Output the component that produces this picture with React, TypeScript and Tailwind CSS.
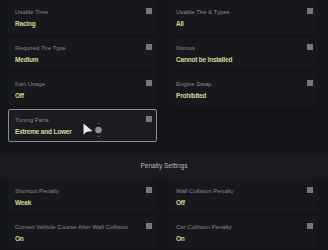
const TOP = [
  ["Usable Tires", "Racing", "Usable Tire & Types", "All"],
  ["Required Tire Type", "Medium", "Nitrous", "Cannot be Installed"],
  ["Kart Usage", "Off", "Engine Swap", "Prohibited"],
];

const PENALTY = [
  ["Shortcut Penalty", "Weak", "Wall Collision Penalty", "Off"],
  ["Correct Vehicle Course After Wall Collision", "On", "Car Collision Penalty", "On"],
];

function Cell({ label, value, selected }: { label: string; value: string; selected?: boolean }) {
  return (
    <div
      className={`relative h-[33px] w-[149px] rounded-[2px] px-[6px] pt-[6px] ${
        selected ? "border border-[#8a8b8d] bg-[#1b1c1f]" : "border border-transparent bg-[#17181b]"
      }`}
    >
      <div className="text-[6px] leading-[8px] text-[#87888b]">{label}</div>
      <div className="mt-[3px] text-[6.5px] font-bold leading-[10px] tracking-[-0.2px] text-[#d3d99b]">
        {value}
      </div>
      <span className="absolute right-[4px] top-[6px] h-[6px] w-[6px] bg-[#77787a]" />
    </div>
  );
}

function Pointer() {
  return (
    <svg className="absolute left-[82px] top-[121px]" width="24" height="18" viewBox="0 0 24 18">
      <path d="M1.5 2.5 L1.5 13.5 L4.5 11 L10.5 10 Z" fill="#e8e8e8" />
      <circle cx="16.5" cy="9" r="3.3" fill="#8d8e90" />
      <circle cx="16.5" cy="2.5" r="0.8" fill="#6a6b6d" />
      <circle cx="16.5" cy="15.5" r="0.8" fill="#6a6b6d" />
    </svg>
  );
}

export default function App() {
  return (
    <div
      className="relative h-[250px] w-[328px] overflow-hidden bg-[#141518]"
      style={{ fontFamily: '"Liberation Sans", Arial, sans-serif' }}
    >
      <div className="flex flex-col gap-[3px] px-2 pt-[1px]">
        {TOP.map((r) => (
          <div key={r[0]} className="flex gap-3">
            <Cell label={r[0]} value={r[1]} />
            <Cell label={r[2]} value={r[3]} />
          </div>
        ))}
        <div className="flex gap-3">
          <Cell label="Tuning Parts" value="Extreme and Lower" selected />
        </div>
      </div>

      <div className="mt-[11px] flex h-[26px] items-center justify-center bg-[#1a1b1e] text-[6.5px] text-[#b9babc]">
        Penalty Settings
      </div>

      <div className="flex flex-col gap-[3px] px-2 pt-[1px]">
        {PENALTY.map((r) => (
          <div key={r[0]} className="flex gap-3">
            <Cell label={r[0]} value={r[1]} />
            <Cell label={r[2]} value={r[3]} />
          </div>
        ))}
      </div>

      <Pointer />
    </div>
  );
}
